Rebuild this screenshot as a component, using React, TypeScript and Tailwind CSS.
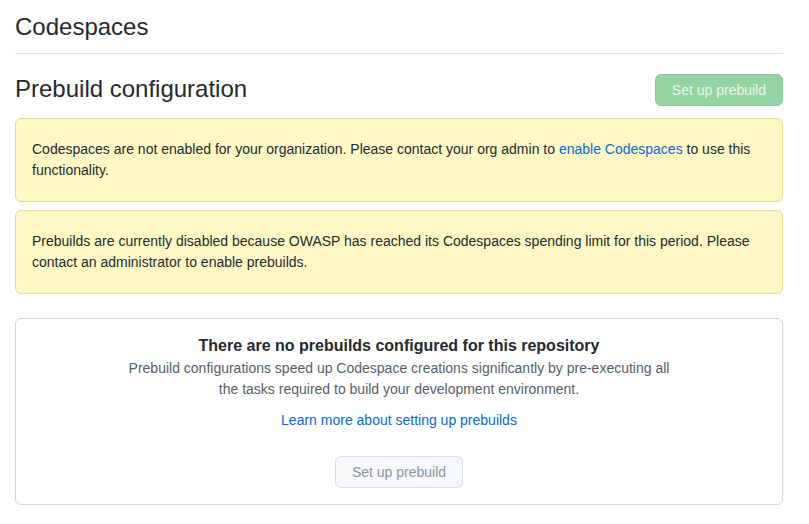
// Codespaces settings — prebuild configuration, empty state.

const FONT = { fontFamily: '"Liberation Sans", Arial, sans-serif' }

function Flash({ children }: { children: React.ReactNode }) {
  return (
    <div className="rounded-md border border-[#ecd88f] bg-[#fff8c5] px-4 py-5 text-sm leading-[21px] text-[#24292f]">
      {children}
    </div>
  )
}

export default function App() {
  return (
    <div style={FONT} className="min-h-screen bg-white pl-[15px] pr-[26px] text-[#24292f]">
      <div className="border-b border-[#d8dee4] pt-[9px] pb-2">
        <h2 className="text-2xl leading-9 font-normal">Codespaces</h2>
      </div>

      <div className="mt-5 flex items-start justify-between">
        <h2 className="text-2xl leading-[30px] font-normal">Prebuild configuration</h2>
        <button className="h-8 rounded-md border border-[#8bc99a] bg-[#94d3a2] px-4 text-sm text-white/80">
          Set up prebuild
        </button>
      </div>

      <div className="mt-3 flex flex-col gap-2">
        <Flash>
          Codespaces are not enabled for your organization. Please contact your org admin to{' '}
          <a className="text-[#0969da]">enable Codespaces</a> to use this functionality.
        </Flash>
        <Flash>
          Prebuilds are currently disabled because OWASP has reached its Codespaces spending limit for this
          period. Please contact an administrator to enable prebuilds.
        </Flash>
      </div>

      <div className="mt-6 flex flex-col items-center rounded-md border border-[#d0d7de] px-4 pt-[15px] pb-4 text-center">
        <h3 className="text-base leading-6 font-bold">There are no prebuilds configured for this repository</h3>
        <p className="max-w-[550px] text-sm leading-[21px] text-[#57606a]">
          Prebuild configurations speed up Codespace creations significantly by pre-executing all the tasks
          required to build your development environment.
        </p>
        <a className="mt-2.5 text-sm leading-[21px] text-[#0969da]">Learn more about setting up prebuilds</a>
        <button className="mt-[25px] h-8 rounded-md border border-[#d8dee4] bg-[#f6f8fa] px-4 text-sm text-[#8c959f]">
          Set up prebuild
        </button>
      </div>
    </div>
  )
}
